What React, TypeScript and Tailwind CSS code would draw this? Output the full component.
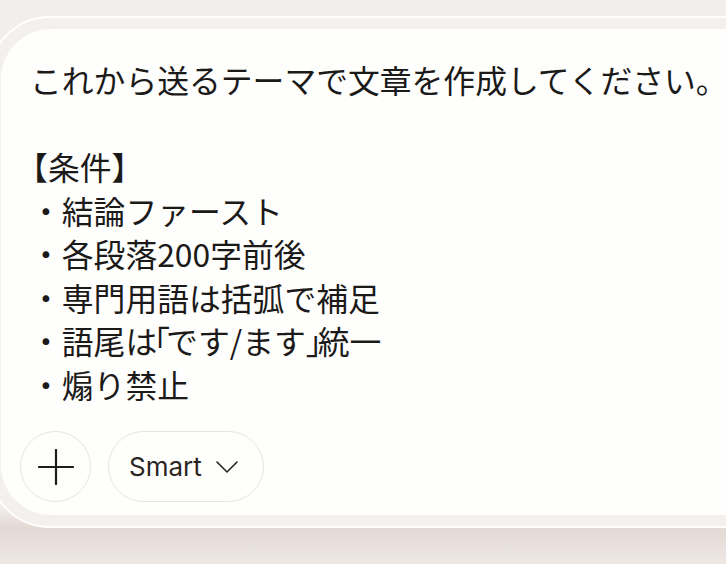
import React from "react";

const H = ({ children, t = "" }: { children: React.ReactNode; t?: string }) => (
  <span className={"[font-feature-settings:'halt'] " + t}>{children}</span>
);

export default function App() {
  return (
    <div
      className="relative w-[726px] h-[564px] overflow-hidden pt-[16px] bg-[linear-gradient(to_bottom,#f2eeeb_0px,#f3efec_505px,#e3d9d5_528px,#eee8e5_564px)]"
      style={{ fontFamily: '"Noto Sans CJK JP", "Noto Sans", sans-serif' }}
    >
      <div className="ml-[-12px] w-[900px] rounded-[62px] border-2 border-white bg-[#f4f0ed] p-[11px]">
        <div className="h-[486px] rounded-[50px] bg-[#fefefd] pl-[29px] pt-[29px] pb-[13px] flex flex-col justify-between">
          <div className="text-[31.8px] leading-[43.5px] text-[#1c1a19] whitespace-pre">
            <div>これから送るテーマで文章を作成してください。</div>
            <div>&nbsp;</div>
            <div className="ml-[2px]">
              <H>【</H>条件<H>】</H>
            </div>
            <div>・結論ファースト</div>
            <div>・各段落200字前後</div>
            <div>・専門用語は括弧で補足</div>
            <div>
              ・語尾は<span className="ml-[-3px]" /><H t="tracking-[-4px]">「</H>です/ます<H t="tracking-[-4px]">」</H>統一
            </div>
            <div>・煽り禁止</div>
          </div>
          <div className="ml-[-10px] flex items-center gap-[17px]">
            <button className="w-[71px] h-[71px] rounded-full border-[1.5px] border-[#e7e4e1] flex items-center justify-center">
              <svg width="36" height="36" viewBox="0 0 36 36" fill="none" stroke="#1f1c1a" strokeWidth="2.2" strokeLinecap="round">
                <line x1="18" y1="1" x2="18" y2="35" />
                <line x1="1" y1="18" x2="35" y2="18" />
              </svg>
            </button>
            <button
              className="h-[71px] rounded-full border-[1.5px] border-[#e7e4e1] pl-[20px] pr-[25px] flex items-center gap-[14px] text-[26px] text-[#2a2522]"
              style={{ fontFamily: 'Inter, "Noto Sans", sans-serif' }}
            >
              <span>Smart</span>
              <svg width="22" height="12" viewBox="0 0 22 12" fill="none" stroke="#2a2522" strokeWidth="1.6" strokeLinecap="round" strokeLinejoin="round">
                <polyline points="1,1 11,11 21,1" />
              </svg>
            </button>
          </div>
        </div>
      </div>
    </div>
  );
}
